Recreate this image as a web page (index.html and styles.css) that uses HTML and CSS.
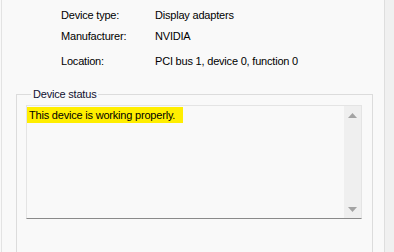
FILE: index.html
```html
<!DOCTYPE html>
<html>
<head>
<meta charset="utf-8">
<link rel="stylesheet" href="styles.css">
</head>
<body>
<div class="page">
  <div class="edge-left"></div>
  <div class="main">
    <div class="props">
      <div class="row r1"><span class="label">Device type:</span><span class="value">Display adapters</span></div>
      <div class="row r2"><span class="label">Manufacturer:</span><span class="value">NVIDIA</span></div>
      <div class="row r3"><span class="label">Location:</span><span class="value">PCI bus 1, device 0, function 0</span></div>
    </div>
    <fieldset class="group">
      <legend class="legend">Device status</legend>
      <div class="textbox">
        <div class="text"><span class="hl">This device is working properly.</span></div>
        <div class="scrollbar">
          <svg class="arrow" width="9" height="6" viewBox="0 0 9 6"><path d="M0 6 L4.5 1 L9 6 Z" fill="#a3a3a3"/></svg>
          <svg class="arrow" width="9" height="6" viewBox="0 0 9 6"><path d="M0 0 L4.5 5 L9 0 Z" fill="#a3a3a3"/></svg>
        </div>
      </div>
    </fieldset>
  </div>
  <div class="edge-right"></div>
</div>
</body>
</html>
```
FILE: styles.css
```css
html, body {
  margin: 0;
  padding: 0;
}
body {
  width: 394px;
  height: 252px;
  overflow: hidden;
  background: #f9f9f9;
  font-family: "Liberation Sans", Arial, sans-serif;
  font-size: 11px;
  letter-spacing: -0.2px;
  color: #000;
}
.page {
  display: flex;
  height: 252px;
}
.edge-left {
  width: 1px;
  border-right: 1px solid #e3e3e3;
  background: #f9f9f9;
}
.main {
  flex: 1;
  display: flex;
  flex-direction: column;
}
.edge-right {
  width: 9px;
  border-left: 1px solid #dedede;
  background: #f0f0f0;
}
.props {
  padding-left: 59px;
}
.row {
  display: flex;
  line-height: 16px;
}
.r1 { margin-top: 7px; }
.r2 { margin-top: 5px; }
.r3 { margin-top: 9px; }
.label {
  width: 94px;
}
.group {
  margin: 17px 11px 0 14px;
  padding: 3px 10px 0 9px;
  border: 1px solid #dcdcdc;
  border-bottom: none;
  flex: 1;
  min-width: 0;
}
.legend {
  padding: 0 2px;
  margin-left: 5px;
  line-height: 16px;
  color: #101030;
}
.textbox {
  display: flex;
  height: 112px;
  border: 1px solid #e4e4e4;
  border-bottom: 1px solid #8a8a8a;
  background: #f9f9f9;
}
.text {
  flex: 1;
  padding: 1px 0 0 0;
  line-height: 16px;
}
.hl {
  display: inline-block;
  background: #ffee00;
  padding: 0 8px 0 2px;
}
.scrollbar {
  width: 17px;
  background: #efefef;
  display: flex;
  flex-direction: column;
  justify-content: space-between;
  align-items: center;
  padding: 6px 0 5px;
}
.arrow {
  display: block;
}
```
